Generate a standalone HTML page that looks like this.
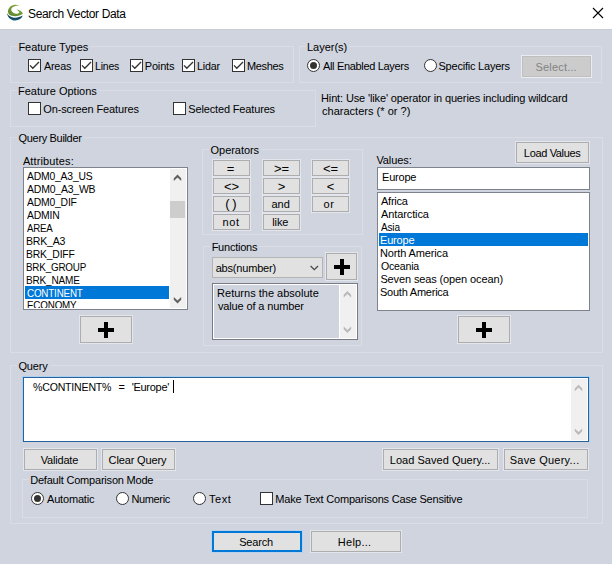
<!DOCTYPE html>
<html><head><meta charset="utf-8">
<style>
*{box-sizing:border-box;margin:0;padding:0}
html,body{width:612px;height:564px;overflow:hidden;background:#cfd4de;font-family:"Liberation Sans",sans-serif;font-size:11px;color:#000}
.a{position:absolute}
.t{position:absolute;white-space:nowrap;line-height:13px;height:13px;margin-top:1px}
#title{left:0;top:0;width:612px;height:29px;background:#fff}
.gb{position:absolute;border:1px solid #dadde6}
.gl{position:absolute;white-space:nowrap;line-height:13px;background:#cfd4de;padding:0 2px;margin-top:1px}
.cb{position:absolute;width:13px;height:13px;border:1px solid #333;background:#fff}
.cb svg{position:absolute;left:-1px;top:-1px}
.rb{position:absolute;width:13px;height:13px;border:1px solid #333;background:#fff;border-radius:50%}
.rb.on:after{content:"";position:absolute;left:2px;top:2px;width:7px;height:7px;border-radius:50%;background:#333}
.btn{position:absolute;border:1px solid #adadad;background:#e1e1e1;box-shadow:0 0 0 1px #e3e6ec}
.btn.dis{box-shadow:0 0 0 1px #eaecf1}
.btn .t{left:0;width:100%;text-align:center}
.lb{position:absolute;background:#fff;border:1px solid #7d828c}
.sel{position:absolute;background:#0078d7}
.plus{position:absolute;width:16px;height:16px}
.plus:before{content:"";position:absolute;left:0;top:6px;width:16px;height:4px;background:#000}
.plus:after{content:"";position:absolute;left:6px;top:0;width:4px;height:16px;background:#000}
</style></head><body>
<div id="title" class="a"></div><div class="a" style="left:0;top:29px;width:612px;height:1px;background:#c9cdd6"></div>
<div id="wrap" style="position:absolute;left:0;top:0;width:612px;height:564px;">
<svg class="a" style="left:4px;top:2px" width="24" height="22" viewBox="0 0 612 561">
 <defs><linearGradient id="gg" x1="0.9" y1="0" x2="0.2" y2="1"><stop offset="0" stop-color="#b9cf86"/><stop offset="0.25" stop-color="#7d9f3c"/><stop offset="1" stop-color="#5f8a2e"/></linearGradient>
 <linearGradient id="bg" x1="0" y1="0" x2="0" y2="1"><stop offset="0" stop-color="#0c2f49"/><stop offset="1" stop-color="#175a75"/></linearGradient></defs>
 <path d="M78 285 C90 400 200 480 290 470 C380 465 460 420 475 345 C400 385 330 408 260 400 C180 392 110 350 78 285Z" fill="url(#bg)"/>
 <path d="M400 88 C330 60 230 60 170 110 C100 170 80 260 130 320 C200 372 380 385 480 300 C470 250 400 200 310 185 C350 215 390 240 395 265 C340 320 230 300 195 230 C160 160 220 95 400 88Z" fill="url(#gg)"/>
</svg>
<div class="t" style="left:28px;top:6px;font-size:12px;line-height:14px;letter-spacing:-0.36px">Search Vector Data</div>
<svg class="a" style="left:592px;top:7px" width="12" height="12" viewBox="0 0 12 12"><path d="M1 1L11 11M11 1L1 11" stroke="#000" stroke-width="1.1" fill="none"/></svg>
<div class="gb" style="left:10px;top:46px;width:284px;height:37px"></div>
<div class="gl" style="left:17px;top:40px;padding-left:1.40px;letter-spacing:-0.016px">Feature Types</div>
<div class="cb" style="left:28px;top:59px"><svg width="13" height="13" viewBox="0 0 13 13"><path d="M2 6.4L4.8 9.3L11 3.1" stroke="#333" stroke-width="1.35" fill="none"/></svg></div>
<div class="t" style="left:44.00px;top:59px;letter-spacing:-0.200px;transform:scaleX(0.9786);transform-origin:0 0;">Areas</div>
<div class="cb" style="left:80px;top:59px"><svg width="13" height="13" viewBox="0 0 13 13"><path d="M2 6.4L4.8 9.3L11 3.1" stroke="#333" stroke-width="1.35" fill="none"/></svg></div>
<div class="t" style="left:95.25px;top:59px;letter-spacing:-0.200px;transform:scaleX(0.9520);transform-origin:0 0;">Lines</div>
<div class="cb" style="left:130px;top:59px"><svg width="13" height="13" viewBox="0 0 13 13"><path d="M2 6.4L4.8 9.3L11 3.1" stroke="#333" stroke-width="1.35" fill="none"/></svg></div>
<div class="t" style="left:144.80px;top:59px;letter-spacing:-0.190px;">Points</div>
<div class="cb" style="left:182px;top:59px"><svg width="13" height="13" viewBox="0 0 13 13"><path d="M2 6.4L4.8 9.3L11 3.1" stroke="#333" stroke-width="1.35" fill="none"/></svg></div>
<div class="t" style="left:197.25px;top:59px;letter-spacing:-0.200px;transform:scaleX(0.9739);transform-origin:0 0;">Lidar</div>
<div class="cb" style="left:232px;top:59px"><svg width="13" height="13" viewBox="0 0 13 13"><path d="M2 6.4L4.8 9.3L11 3.1" stroke="#333" stroke-width="1.35" fill="none"/></svg></div>
<div class="t" style="left:247.00px;top:59px;letter-spacing:-0.350px;">Meshes</div>
<div class="gb" style="left:299px;top:46px;width:303px;height:37px"></div>
<div class="gl" style="left:306px;top:40px;padding-left:1.00px;letter-spacing:-0.010px">Layer(s)</div>
<div class="rb on" style="left:307px;top:59px"></div>
<div class="t" style="left:323.00px;top:59px;letter-spacing:-0.328px;">All Enabled Layers</div>
<div class="rb" style="left:424px;top:59px"></div>
<div class="t" style="left:438.50px;top:59px;letter-spacing:-0.220px;">Specific Layers</div>
<div class="btn dis" style="left:522px;top:56px;width:69px;height:21px;background:#cccccc;border-color:#bfbfbf;"><div class="t" style="top:3px;left:-0.32px;letter-spacing:0.172px;color:#838383;">Select...</div></div>
<div class="gb" style="left:10px;top:90px;width:306px;height:37px"></div>
<div class="gl" style="left:17px;top:84px;padding-left:1.00px;letter-spacing:-0.006px">Feature Options</div>
<div class="cb" style="left:28px;top:102px"></div>
<div class="t" style="left:43.25px;top:102px;letter-spacing:-0.120px;">On-screen Features</div>
<div class="cb" style="left:173px;top:102px"></div>
<div class="t" style="left:188.25px;top:102px;letter-spacing:-0.150px;">Selected Features</div>
<div class="t" style="left:321.00px;top:91px;letter-spacing:-0.131px;">Hint: Use 'like' operator in queries including wildcard</div>
<div class="t" style="left:322.00px;top:104px;letter-spacing:0.017px;">characters (* or ?)</div>
<div class="gb" style="left:10px;top:137px;width:593px;height:216px"></div>
<div class="gl" style="left:17px;top:131px;padding-left:1.60px;letter-spacing:-0.333px">Query Builder</div>
<div class="t" style="left:22.90px;top:154px;letter-spacing:0.134px;">Attributes:</div>
<div class="lb" style="left:23px;top:167px;width:165px;height:143px"></div>
<div class="a" style="left:170px;top:169px;width:16px;height:139px;background:#f0f0f0"></div>
<div class="a" style="left:170px;top:201px;width:15px;height:17px;background:#cdcdcd"></div>
<svg class="a" style="left:170px;top:169px" width="16" height="138" viewBox="0 0 16 138"><path d="M7.5 5.6L11.2 9.3L11.2 12L7.5 8.4L3.8 12L3.8 9.3Z" fill="#606060"/><path d="M7.5 134.4L11.2 130.7L11.2 128L7.5 131.6L3.8 128L3.8 130.7Z" fill="#606060"/></svg>
<div class="sel" style="left:25px;top:286px;width:144px;height:13px"></div>
<div class="t" style="left:26.60px;top:169px;letter-spacing:-0.200px;transform:scaleX(0.9420);transform-origin:0 0;">ADM0_A3_US</div>
<div class="t" style="left:26.60px;top:182px;letter-spacing:-0.200px;transform:scaleX(0.9505);transform-origin:0 0;">ADM0_A3_WB</div>
<div class="t" style="left:26.60px;top:195px;letter-spacing:-0.200px;transform:scaleX(0.9419);transform-origin:0 0;">ADM0_DIF</div>
<div class="t" style="left:26.60px;top:208px;letter-spacing:-0.200px;transform:scaleX(0.9435);transform-origin:0 0;">ADMIN</div>
<div class="t" style="left:26.60px;top:221px;letter-spacing:-0.200px;transform:scaleX(0.8793);transform-origin:0 0;">AREA</div>
<div class="t" style="left:26.44px;top:234px;letter-spacing:-0.200px;transform:scaleX(0.9580);transform-origin:0 0;">BRK_A3</div>
<div class="t" style="left:26.44px;top:247px;letter-spacing:-0.200px;transform:scaleX(0.9435);transform-origin:0 0;">BRK_DIFF</div>
<div class="t" style="left:26.44px;top:260px;letter-spacing:-0.200px;transform:scaleX(0.8924);transform-origin:0 0;">BRK_GROUP</div>
<div class="t" style="left:25.80px;top:273px;letter-spacing:-0.200px;transform:scaleX(0.9132);transform-origin:0 0;">BRK_NAME</div>
<div class="t" style="left:26.60px;top:286px;letter-spacing:-0.200px;transform:scaleX(0.8921);transform-origin:0 0;color:#fff;">CONTINENT</div>
<div class="a" style="left:25px;top:299px;width:144px;height:9px;overflow:hidden"><div class="t" style="left:1.60px;top:-1px;letter-spacing:-0.200px;transform:scaleX(0.8921);transform-origin:0 0">ECONOMY</div></div>
<div class="btn" style="left:80px;top:316px;width:52px;height:27px;"><div class="plus" style="left:17px;top:5px"></div></div>
<div class="gb" style="left:202px;top:149px;width:161px;height:86px"></div>
<div class="gl" style="left:209px;top:143px;padding-left:1.60px;letter-spacing:-0.050px">Operators</div>
<div class="btn" style="left:213px;top:160px;width:37px;height:16px;"><div class="t" style="top:0px;left:-1.12px;letter-spacing:-0.150px;font-size:13px;">=</div></div>
<div class="btn" style="left:213px;top:178px;width:37px;height:16px;"><div class="t" style="top:0px;left:0.00px;letter-spacing:-0.150px;font-size:13px;">&lt;&gt;</div></div>
<div class="btn" style="left:213px;top:196px;width:37px;height:16px;"><div class="t" style="top:-1px;left:-0.80px;letter-spacing:-0.465px;font-size:13px;">( )</div></div>
<div class="btn" style="left:213px;top:214px;width:37px;height:16px;"><div class="t" style="top:0px;left:-0.40px;letter-spacing:0.650px;">not</div></div>
<div class="btn" style="left:263px;top:160px;width:37px;height:16px;"><div class="t" style="top:0px;left:0.00px;letter-spacing:-0.150px;font-size:13px;">&gt;=</div></div>
<div class="btn" style="left:263px;top:178px;width:37px;height:16px;"><div class="t" style="top:0px;left:0.00px;letter-spacing:-0.150px;font-size:13px;">&gt;</div></div>
<div class="btn" style="left:263px;top:196px;width:37px;height:16px;"><div class="t" style="top:0px;left:-0.80px;letter-spacing:0.050px;">and</div></div>
<div class="btn" style="left:263px;top:214px;width:37px;height:16px;"><div class="t" style="top:0px;left:-1.24px;letter-spacing:-0.160px;">like</div></div>
<div class="btn" style="left:312px;top:160px;width:37px;height:16px;"><div class="t" style="top:0px;left:0.00px;letter-spacing:-0.150px;font-size:13px;">&lt;=</div></div>
<div class="btn" style="left:312px;top:178px;width:37px;height:16px;"><div class="t" style="top:0px;left:0.00px;letter-spacing:-0.150px;font-size:13px;">&lt;</div></div>
<div class="btn" style="left:312px;top:196px;width:37px;height:16px;"><div class="t" style="top:0px;left:-1.60px;letter-spacing:0.450px;">or</div></div>
<div class="gb" style="left:203px;top:246px;width:159px;height:100px"></div>
<div class="gl" style="left:210px;top:240px;padding-left:1.64px;letter-spacing:-0.225px">Functions</div>
<div class="a" style="left:212px;top:257px;width:111px;height:21px;border:1px solid #b4b4b4;background:#e1e1e1"></div>
<div class="t" style="left:215.70px;top:261px;letter-spacing:-0.190px;">abs(number)</div>
<svg class="a" style="left:309px;top:264px" width="11" height="7" viewBox="0 0 11 7"><path d="M1.6 2L5.3 5.7L9 2" stroke="#444" stroke-width="1.2" fill="none"/></svg>
<div class="btn" style="left:326px;top:253px;width:31px;height:27px;"><div class="plus" style="left:7px;top:5px"></div></div>
<div class="a" style="left:212px;top:283px;width:146px;height:57px;border:1px solid #767b85"><div class="a" style="left:0;top:0;width:144px;height:55px;border:1px solid #fff"></div><div class="a" style="left:126px;top:1px;width:17px;height:53px;background:#f0f0f0;border-left:1px solid #fff"></div></div>
<svg class="a" style="left:340px;top:285px" width="16" height="53" viewBox="0 0 16 53"><path d="M7.4 6.1L11.1 9.8L11.1 12.6L7.4 8.9L3.7 12.6L3.7 9.8Z" fill="#b9b9b9"/><path d="M7.4 47.9L11.1 44.2L11.1 41.4L7.4 45.1L3.7 41.4L3.7 44.2Z" fill="#b9b9b9"/></svg>
<div class="t" style="left:217.10px;top:286px;letter-spacing:0.008px;">Returns the absolute</div>
<div class="t" style="left:217.90px;top:299px;letter-spacing:-0.125px;">value of a number</div>
<div class="t" style="left:376.40px;top:153px;letter-spacing:-0.079px;">Values:</div>
<div class="btn" style="left:516px;top:142px;width:73px;height:21px;"><div class="t" style="top:3px;left:-0.40px;letter-spacing:-0.350px;">Load Values</div></div>
<div class="lb" style="left:377px;top:167px;width:213px;height:23px"></div>
<div class="t" style="left:382.10px;top:170px;letter-spacing:-0.230px;">Europe</div>
<div class="lb" style="left:377px;top:192px;width:213px;height:119px"></div>
<div class="sel" style="left:379px;top:233px;width:209px;height:13px"></div>
<div class="t" style="left:381.04px;top:194px;letter-spacing:-0.264px;">Africa</div>
<div class="t" style="left:381.00px;top:207px;letter-spacing:-0.105px;">Antarctica</div>
<div class="t" style="left:381.04px;top:220px;letter-spacing:-0.200px;transform:scaleX(0.9124);transform-origin:0 0;">Asia</div>
<div class="t" style="left:380.00px;top:233px;letter-spacing:-0.190px;color:#fff;">Europe</div>
<div class="t" style="left:380.00px;top:246px;letter-spacing:-0.137px;">North America</div>
<div class="t" style="left:381.00px;top:259px;letter-spacing:-0.200px;transform:scaleX(0.9600);transform-origin:0 0;">Oceania</div>
<div class="t" style="left:380.40px;top:272px;letter-spacing:-0.123px;">Seven seas (open ocean)</div>
<div class="t" style="left:380.00px;top:285px;letter-spacing:-0.233px;">South America</div>
<div class="btn" style="left:458px;top:316px;width:52px;height:27px;"><div class="plus" style="left:17px;top:5px"></div></div>
<div class="gb" style="left:10px;top:365px;width:593px;height:159px"></div>
<div class="gl" style="left:17px;top:359px;padding-left:1.40px;letter-spacing:-0.150px">Query</div>
<div class="a" style="left:22px;top:376px;width:568px;height:66px;border:1px solid #a9d1f3;border-bottom:none"><div class="a" style="left:0;top:0;width:566px;height:65px;border:1px solid #28629a;background:#fff"></div></div>
<div class="a" style="left:571px;top:379px;width:16px;height:61px;background:#f0f0f0"></div>
<svg class="a" style="left:571px;top:379px" width="16" height="60" viewBox="0 0 16 60"><path d="M7.5 5.7L11.2 9.4L11.2 12.2L7.5 8.5L3.8 12.2L3.8 9.4Z" fill="#b9b9b9"/><path d="M7.5 55.9L11.2 52.2L11.2 49.4L7.5 53.1L3.8 49.4L3.8 52.2Z" fill="#b9b9b9"/></svg>
<div class="t" style="left:32.70px;top:380px;letter-spacing:-0.200px;transform:scaleX(0.9606);transform-origin:0 0;">%CONTINENT%</div>
<div class="t" style="left:118.40px;top:380px;letter-spacing:0.850px;">=</div>
<div class="t" style="left:131.70px;top:380px;letter-spacing:-0.292px;">'Europe'</div>
<div class="a" style="left:173px;top:380px;width:1px;height:13px;background:#000"></div>
<div class="btn" style="left:24px;top:449px;width:73px;height:21px;"><div class="t" style="top:3px;left:-1.08px;letter-spacing:-0.207px;">Validate</div></div>
<div class="btn" style="left:102px;top:449px;width:73px;height:21px;"><div class="t" style="top:3px;left:-1.00px;letter-spacing:-0.130px;">Clear Query</div></div>
<div class="btn" style="left:383px;top:449px;width:115px;height:21px;"><div class="t" style="top:3px;left:-0.40px;letter-spacing:0.028px;">Load Saved Query...</div></div>
<div class="btn" style="left:504px;top:449px;width:84px;height:21px;"><div class="t" style="top:3px;left:-1.40px;letter-spacing:0.250px;">Save Query...</div></div>
<div class="gb" style="left:22px;top:479px;width:566px;height:39px"></div>
<div class="gl" style="left:29px;top:473px;padding-left:1.20px;letter-spacing:-0.204px">Default Comparison Mode</div>
<div class="rb on" style="left:31px;top:492px"></div>
<div class="t" style="left:47.00px;top:492px;letter-spacing:-0.175px;">Automatic</div>
<div class="rb" style="left:116px;top:492px"></div>
<div class="t" style="left:131.40px;top:492px;letter-spacing:-0.350px;">Numeric</div>
<div class="rb" style="left:193px;top:492px"></div>
<div class="t" style="left:209.00px;top:492px;letter-spacing:0.583px;">Text</div>
<div class="cb" style="left:260px;top:492px"></div>
<div class="t" style="left:275.34px;top:492px;letter-spacing:-0.201px;">Make Text Comparisons Case Sensitive</div>
<div class="a" style="left:211px;top:530px;width:92px;height:23px;border:1px solid #b9d3ec"><div class="a" style="left:0;top:0;width:90px;height:21px;border:2px solid #0078d7;background:#e1e1e1"></div></div>
<div class="t" style="left:239.20px;top:535px;letter-spacing:-0.190px;">Search</div>
<div class="btn" style="left:311px;top:531px;width:90px;height:21px;"><div class="t" style="top:3px;left:-1.40px;letter-spacing:0.250px;">Help...</div></div>
</div></body></html>
